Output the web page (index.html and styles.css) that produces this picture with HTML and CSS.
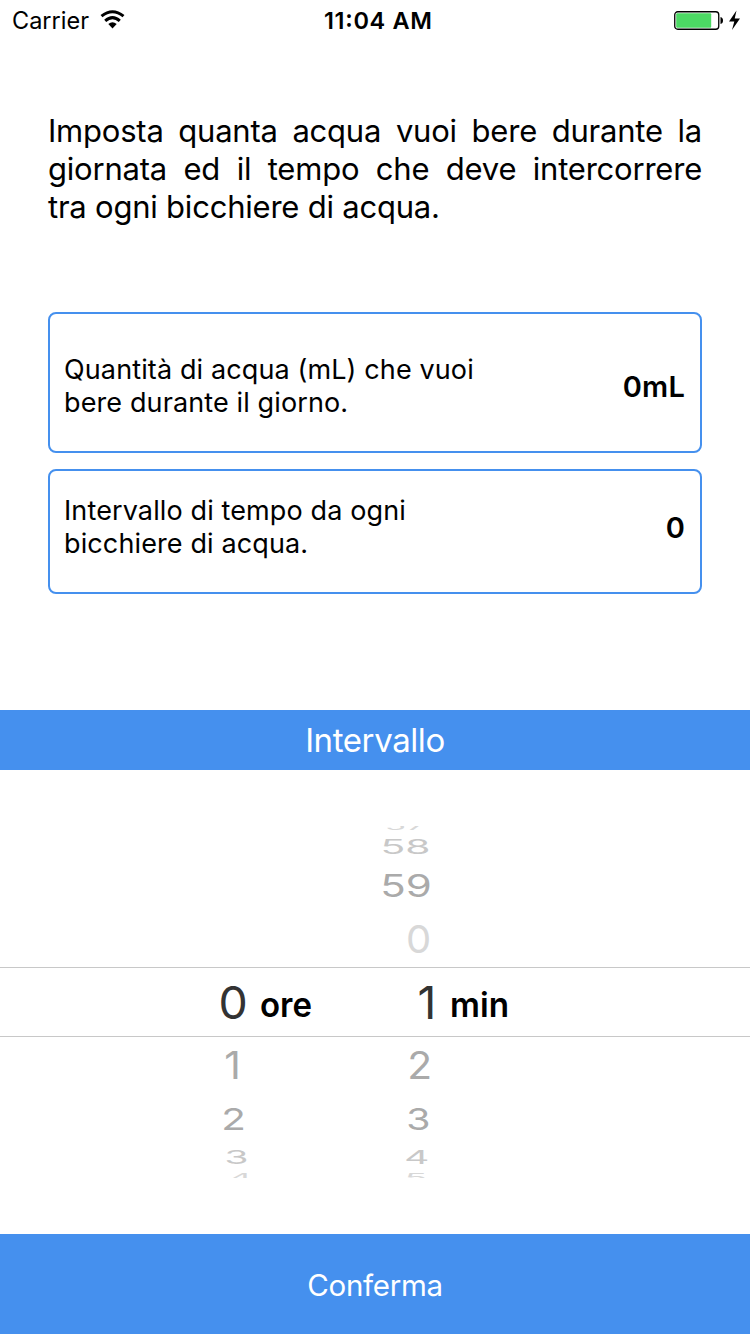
FILE: index.html
```html
<!DOCTYPE html>
<html lang="it"><head><meta charset="utf-8"><title>Intervallo</title><link rel="stylesheet" href="styles.css"></head>
<body><main class="screen">
<header class="status">
<div class="carrier"><svg width="78" height="30"><text class="t24" x="0" y="22" textLength="77" lengthAdjust="spacingAndGlyphs">Carrier</text></svg>
<svg class="wifi" width="26" height="20" viewBox="0 0 26 20"><g fill="none" stroke="#000" stroke-width="3"><path d="M1.500 6.200Q12.500-2.800 23.500 6.200"/><path d="M5.200 10.900Q12.500 4.300 19.800 10.900"/></g><path d="M8.300 14Q12.500 10.600 16.700 14L12.500 18.500Z"/></svg></div>
<svg class="clock" width="110" height="30"><text class="t24 semi" x="0" y="22" textLength="108" lengthAdjust="spacing">11:04 AM</text></svg>
<svg class="battery" width="67" height="22" viewBox="0 0 67 22"><rect x=".75" y="1.750" width="44" height="17.500" rx="3" fill="#fff" stroke="#000" stroke-width="1.300"/><rect x="2.200" y="3.200" width="35" height="14.600" rx="1" fill="#4cd964"/><path d="M46.500 7q2.500 .5 2.500 3.500t-2.500 3.500z"/><path d="M62.500 .5L55 11.500h5.300L58 20L66 8.500h-5.300z"/></svg>
</header>
<section class="intro"><p class="full">Imposta quanta acqua vuoi bere durante la</p><p class="full">giornata ed il tempo che deve intercorrere</p><p>tra ogni bicchiere di acqua.</p></section>
<section class="cards">
<article class="card amount"><p>Quantità di acqua (mL) che vuoi<br>bere durante il giorno.</p><strong>0mL</strong></article>
<article class="card interval"><p>Intervallo di tempo da ogni<br>bicchiere di acqua.</p><strong>0</strong></article>
</section>
<h1 class="bar">Intervallo</h1>
<section class="picker">
<svg class="wheel" width="750" height="352" viewBox="0 826 750 352">
<path class="rule" d="M0 967.500H750M0 1036.500H750"/>
<g class="digits">
<text class="faint" transform="translate(405.500 829.700) scale(.88 .28)">57</text>
<text class="far" transform="translate(405.500 854) scale(1.020 .49)">58</text>
<text class="near" transform="translate(406 896.500) scale(1.050 .77)">59</text>
<text class="pale" transform="translate(418.600 953) scale(1 .97)">0</text>
<text class="current" transform="translate(427 1019) scale(1.160 1.140)">1</text>
<text class="near" transform="translate(419.700 1079) scale(1.020 .95)">2</text>
<text class="near" transform="translate(418.300 1130) scale(.98 .76)">3</text>
<text class="far" transform="translate(416.700 1164) scale(.97 .48)">4</text>
<text class="faint" transform="translate(416 1182) scale(.92 .28)">5</text>
<text class="current" transform="translate(233.200 1019) scale(1.160 1.140)">0</text>
<text class="near" transform="translate(232.500 1079) scale(1.020 .95)">1</text>
<text class="near" transform="translate(233.500 1130) scale(1.010 .76)">2</text>
<text class="far" transform="translate(236.500 1164) scale(.97 .48)">3</text>
<text class="faint" transform="translate(240.500 1182) scale(.92 .28)">4</text>
</g>
<text class="unit" x="260" y="1017" textLength="52" lengthAdjust="spacingAndGlyphs">ore</text>
<text class="unit" x="450" y="1017" textLength="59" lengthAdjust="spacingAndGlyphs">min</text>
</svg>
</section>
<button class="confirm">Conferma</button>
</main></body></html>
```
FILE: styles.css
```css
*{box-sizing:border-box;margin:0}
body{font-family:Inter,sans-serif;background:#fff;color:#000}
.screen{width:750px;height:1334px;display:flex;flex-direction:column}
.status{height:40px;display:grid;grid-template-columns:312px 1fr 67px;padding:7px 9px 0 12px}
.carrier{display:flex;gap:10px}
.wifi{margin-top:3px}
.battery{margin-top:3px}
.t24{font-size:24px}
.semi{font-size:23.500px;font-weight:600}
.intro{padding:72px 48px 0;height:272px;font-size:31px;line-height:38px;letter-spacing:-.22px}
.full{text-align-last:justify}
.cards{display:flex;flex-direction:column;gap:16px;padding:0 48px;height:398px}
.card{display:flex;justify-content:space-between;align-items:center;border:2px solid #4590ee;border-radius:8px;padding:0 15px 0 14px;font-size:27px;line-height:33px;letter-spacing:.12px}
.card strong{font-size:29px;font-weight:600;letter-spacing:.2px}
.amount{height:141px;padding-top:7px}
.amount strong{padding-top:1px}
.interval{height:125px;padding-bottom:9px}
.bar{height:60px;background:#4590ee;color:#fff;font-weight:400;font-size:33px;text-align:center;line-height:61px;letter-spacing:-.4px}
.picker{height:464px;padding-top:56px}
.wheel{display:block}
.rule{stroke:#c8c8c8;stroke-width:1}
.digits{font-size:40px;text-anchor:middle}
.current{fill:#333}
.near{fill:#aaa}
.far{fill:#c8c8c8}
.pale{fill:#d8d8d8}
.faint{fill:#d8d8d8}
.unit{font-size:34px;font-weight:600}
.confirm{height:100px;border:0;padding:1px 0 0;background:#4590ee;color:#fff;font:400 29.500px Inter,sans-serif;letter-spacing:-.3px}
```
